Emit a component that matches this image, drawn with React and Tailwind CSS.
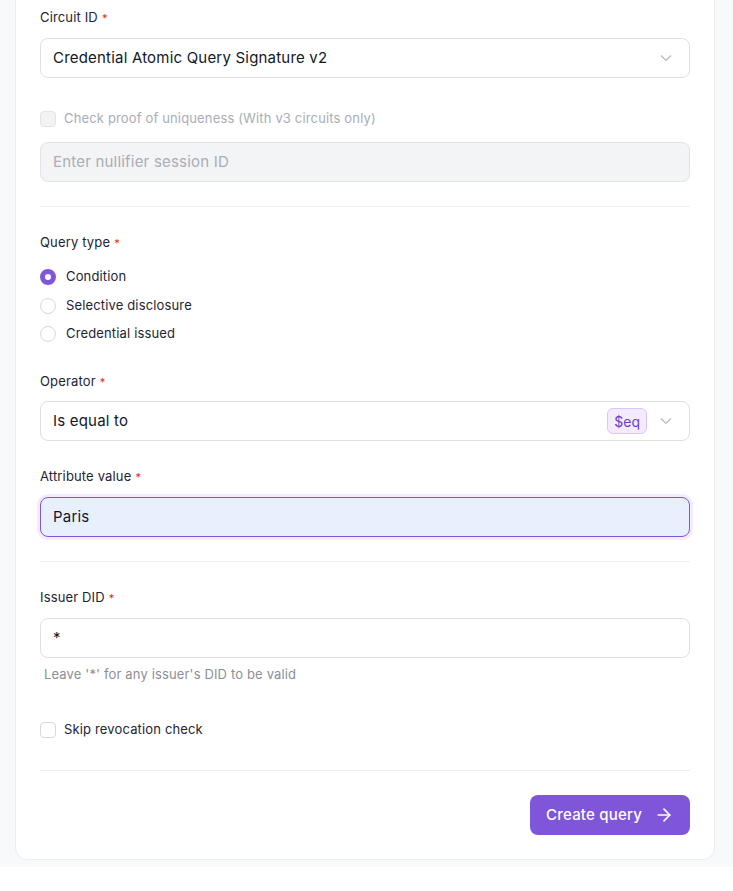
import React from "react";
import { ArrowRight } from "lucide-react";

const font = { fontFamily: "Inter, 'Noto Sans', sans-serif" };

function Label({ children, className = "" }) {
  return (
    <div className={`flex h-5 items-center text-[13px] tracking-[0.15px] text-[#1d2433] ${className}`}>
      {children}
      <span className="ml-1 text-[11px] text-[#d92d20]">*</span>
    </div>
  );
}

function Chevron() {
  return (
    <svg width="14" height="14" viewBox="0 0 14 14" fill="none" className="text-[#b4b8c0]">
      <polyline points="2,4.5 7,9.5 12,4.5" stroke="currentColor" strokeWidth="1.1" />
    </svg>
  );
}

function Select({ value, badge, className = "" }) {
  return (
    <div
      className={`flex h-10 items-center rounded-lg border border-[#dcdfe4] bg-white pl-3 pr-4 ${className}`}
    >
      <span className="flex-1 text-[15px] tracking-[0.2px] text-[#101828]">{value}</span>
      {badge ? (
        <span className="mr-3 flex h-[26px] items-center rounded-md border border-[#d9c4fb] bg-[#f4ebff] px-1.5 text-[14px] text-[#6941c6]">
          {badge}
        </span>
      ) : null}
      <Chevron />
    </div>
  );
}

function Checkbox({ label, disabled = false, className = "" }) {
  return (
    <div className={`flex h-5 items-center gap-2 ${className}`}>
      <span
        className={`h-4 w-4 rounded-[4px] border ${
          disabled ? "border-[#e1e3e7] bg-[#f2f3f5]" : "border-[#d5d8de] bg-white"
        }`}
      />
      <span
        className={`text-[13px] tracking-[0.15px] ${disabled ? "text-[#a9adb5]" : "text-[#1d2433]"}`}
      >
        {label}
      </span>
    </div>
  );
}

function Radio({ label, checked = false }) {
  return (
    <div className="flex h-5 items-center gap-2.5">
      <span
        className={`h-4 w-4 rounded-full ${
          checked ? "border-[5px] border-[#7f56d9] bg-white" : "border border-[#d5d8de] bg-white"
        }`}
      />
      <span className="text-[13px] tracking-[0.15px] text-[#1d2433]">{label}</span>
    </div>
  );
}

function Divider({ className = "" }) {
  return <div className={`h-px bg-[#eceef1] ${className}`} />;
}

export default function App() {
  return (
    <div className="min-h-[891px] bg-[#f8f9fb]" style={font}>
      <div className="ml-[15px] -mt-6 w-[700px] rounded-xl border border-[#eaecf0] bg-white px-6 pb-6 pt-[31px]">
        <Label>Circuit ID</Label>
        <Select value="Credential Atomic Query Signature v2" className="mt-2.5" />

        <Checkbox
          label="Check proof of uniqueness (With v3 circuits only)"
          disabled
          className="mt-[31px]"
        />
        <div className="mt-[13px] flex h-10 items-center rounded-lg border border-[#e1e3e7] bg-[#f3f4f5] px-3 text-[15px] tracking-[0.2px] text-[#a9adb5]">
          Enter nullifier session ID
        </div>

        <Divider className="mt-6" />

        <Label className="mt-[26px]">Query type</Label>
        <div className="mt-[14px] flex flex-col gap-[8.5px]">
          <Radio label="Condition" checked />
          <Radio label="Selective disclosure" />
          <Radio label="Credential issued" />
        </div>

        <Label className="mt-7">Operator</Label>
        <Select value="Is equal to" badge="$eq" className="mt-[9px]" />

        <Label className="mt-[26px]">Attribute value</Label>
        <div className="mt-2.5 flex h-10 items-center rounded-lg border border-[#7f56d9] bg-[#e8f0fe] px-3 text-[15px] tracking-[0.2px] text-[#101828] shadow-[0_0_0_3px_#f4ebff]">
          Paris
        </div>

        <Divider className="mt-6" />

        <Label className="mt-[26px]">Issuer DID</Label>
        <div className="mt-2.5 flex h-10 items-center rounded-lg border border-[#dcdfe4] bg-white px-3 text-[15px] text-[#101828]">
          *
        </div>
        <div className="mt-[7px] flex h-5 items-center pl-1 text-[13px] tracking-[0.15px] text-[#8a8f98]">
          Leave '*' for any issuer's DID to be valid
        </div>

        <Checkbox label="Skip revocation check" className="mt-[35px]" />

        <Divider className="mt-[30px]" />

        <div className="mt-6 flex justify-end">
          <button className="flex h-10 items-center gap-3 rounded-lg bg-[#7f56d9] px-4 text-[15px] font-medium tracking-[0.2px] text-white">
            Create query
            <ArrowRight size={20} strokeWidth={2} />
          </button>
        </div>
      </div>
    </div>
  );
}
